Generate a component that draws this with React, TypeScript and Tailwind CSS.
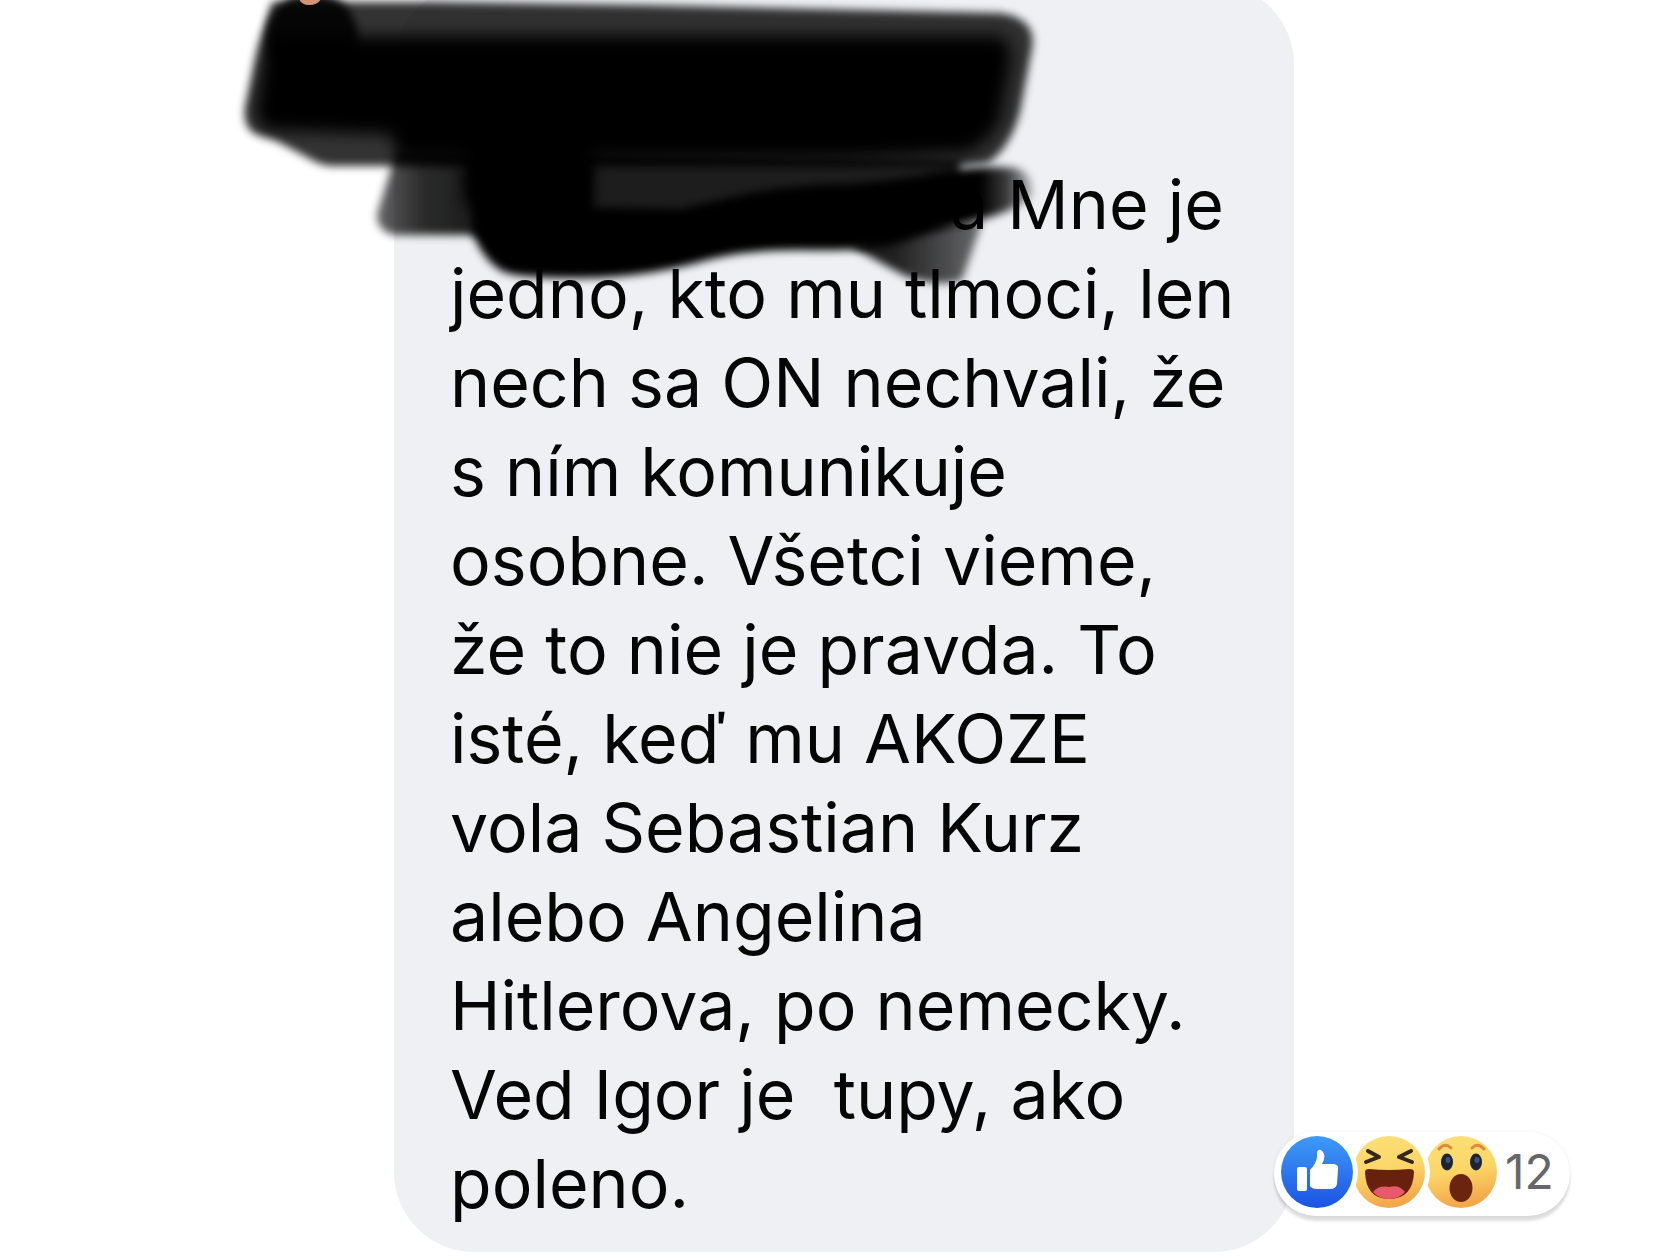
const lines = [
  'jedno, kto mu tlmoci, len',
  'nech sa ON nechvali, že',
  's ním komunikuje',
  'osobne. Všetci vieme,',
  'že to nie je pravda. To',
  'isté, keď mu AKOZE',
  'vola Sebastian Kurz',
  'alebo Angelina',
  'Hitlerova, po nemecky.',
  'Ved Igor je  tupy, ako',
  'poleno.',
]

function Scribble() {
  return (
    <svg
      aria-hidden="true"
      className="absolute -left-[164px] top-4 h-[300px] w-[840px]"
      viewBox="230 0 840 300"
      fill="#000"
    >
      <defs>
        <filter id="soft" x="-10%" y="-20%" width="120%" height="140%">
          <feGaussianBlur stdDeviation="4" />
        </filter>
        <filter id="softer" x="-10%" y="-20%" width="120%" height="140%">
          <feGaussianBlur stdDeviation="8" />
        </filter>
        <linearGradient id="fadeEnd" gradientUnits="userSpaceOnUse" x1="980" y1="0" x2="1034" y2="0">
          <stop offset="0" stopColor="#000" />
          <stop offset="0.5" stopColor="#000" stopOpacity="0.75" />
          <stop offset="1" stopColor="#000" stopOpacity="0.2" />
        </linearGradient>
        <linearGradient id="fadeStart" gradientUnits="userSpaceOnUse" x1="376" y1="0" x2="470" y2="0">
          <stop offset="0" stopColor="#000" stopOpacity="0.6" />
          <stop offset="0.5" stopColor="#000" stopOpacity="0.82" />
          <stop offset="1" stopColor="#000" stopOpacity="0.88" />
        </linearGradient>
        <linearGradient id="fadeTail" gradientUnits="userSpaceOnUse" x1="890" y1="0" x2="985" y2="0">
          <stop offset="0" stopColor="#000" stopOpacity="0.88" />
          <stop offset="1" stopColor="#000" stopOpacity="0.55" />
        </linearGradient>
      </defs>

      {/* Translucent outer strokes */}
      <g filter="url(#soft)">
        <path
          fillOpacity="0.8"
          d="M272 2H430L640 5L1000 13Q1037 18 1032 48L1020 112Q1010 148 988 163L960 166H335Q322 166 312 160L275 140L256 134Q243 128 245 108L258 48Z"
        />
        <path fill="url(#fadeStart)" d="M397 150L377 214Q376 230 394 235H490L560 245L880 225L960 190V160Z" />
        <path fill="url(#fadeTail)" d="M850 246Q880 262 905 276Q940 288 962 280L982 222L900 220Z" />
      </g>

      {/* Solid core */}
      <g filter="url(#softer)">
        <path d="M272 36H1000Q1014 42 1009 70L1000 118Q992 140 968 152L850 158H400L390 134L266 130L256 115L264 60Z" />
        <path d="M464 150H592V205H464Z" />
      </g>
      <path
        filter="url(#soft)"
        fill="url(#fadeEnd)"
        d="M470 160H590L592 207L680 209L750 193Q800 184 850 184Q900 180 940 172Q980 165 1016 168Q1034 174 1032 196Q1020 208 990 217Q930 232 900 243Q860 252 800 250Q740 250 700 262Q640 278 580 278Q520 278 504 272Q484 262 472 232Z"
      />

      {/* Profile photo edge */}
      <circle cx="312" cy="38" r="46" fillOpacity="0.9" filter="url(#soft)" />
      <path d="M298 -4H322Q320 5 309 5Q300 5 298 -4Z" fill="#d29472" />
    </svg>
  )
}

function Reactions() {
  return (
    <button
      type="button"
      aria-label="12 reakcií"
      className="absolute bottom-9 left-[880px] flex h-[84px] items-center rounded-full bg-white pb-1 pl-[7px] pr-4 shadow-[0_5px_3px_rgba(0,0,0,0.13),0_0_4px_rgba(0,0,0,0.06)]"
    >
      <svg aria-hidden="true" className="h-20 w-[220px]" viewBox="0 0 220 80">
        <defs>
          <linearGradient id="blue" x1="0" y1="0" x2="0" y2="1">
            <stop offset="0" stopColor="#3f9bf7" />
            <stop offset="1" stopColor="#1b53e4" />
          </linearGradient>
          <linearGradient id="yellow" x1="0" y1="0" x2="0.2" y2="1">
            <stop offset="0" stopColor="#fbe07a" />
            <stop offset="0.55" stopColor="#fbd667" />
            <stop offset="1" stopColor="#f3a84c" />
          </linearGradient>
        </defs>

        {/* Wow */}
        <circle cx="180" cy="40" r="36" fill="url(#yellow)" />
        <path d="M158 17Q164 10 170 16M191 16Q197 10 203 17" fill="none" stroke="#dc8a3c" strokeWidth="3" strokeLinecap="round" />
        <ellipse cx="166" cy="30" rx="6" ry="8.5" fill="#1c2433" />
        <ellipse cx="195" cy="30" rx="6" ry="8.5" fill="#1c2433" />
        <ellipse cx="167" cy="28" rx="2.5" ry="3" fill="#3c5374" />
        <ellipse cx="196" cy="28" rx="2.5" ry="3" fill="#3c5374" />
        <ellipse cx="180" cy="56" rx="11.5" ry="14" fill="#6b250f" />

        {/* Haha */}
        <circle cx="108" cy="40" r="41" fill="#fff" />
        <circle cx="108" cy="40" r="36" fill="url(#yellow)" />
        <path d="M87 19L98 25L85 30M130 19L118 25L131 30" fill="none" stroke="#33271f" strokeWidth="4" strokeLinecap="round" strokeLinejoin="round" />
        <path d="M84 40Q84 37 88 37Q108 39 128 37Q133 37 133 40Q132 67 108 67Q85 67 84 40Z" fill="#68200f" />
        <path d="M92 60Q98 53 108 55Q118 52 124 60Q118 67 108 67Q98 67 92 60Z" fill="#e85a6b" />

        {/* Like */}
        <circle cx="36" cy="40" r="41" fill="#fff" />
        <circle cx="36" cy="40" r="36" fill="url(#blue)" />
        <rect x="16" y="35" width="10" height="24" rx="2" fill="#fff" />
        <path d="M29 38Q35 32 36 25L36 20Q38 16 41 19Q46 23 41 32H53Q58 33 57 37L56 52Q55 57 49 57H36Q31 57 29 54Z" fill="#fff" />
      </svg>
      <span className="ml-1 text-5xl text-[#65676b]">12</span>
    </button>
  )
}

export default function App() {
  return (
    <main className="overflow-hidden bg-white pb-2 pl-[394px] font-['Inter','Liberation_Sans',sans-serif]">
      <article className="relative -mt-4 max-w-[900px] rounded-[80px] bg-[#eff0f4] pb-6 pl-14 pt-44">
        <p className="whitespace-pre text-[68px] leading-[89px] text-[#050505]">
          <span className="inline-block w-[500px]" />
          {'a Mne je'}
          {lines.map((line) => (
            <span key={line} className="block">
              {line}
            </span>
          ))}
        </p>
        <Scribble />
        <Reactions />
      </article>
    </main>
  )
}
